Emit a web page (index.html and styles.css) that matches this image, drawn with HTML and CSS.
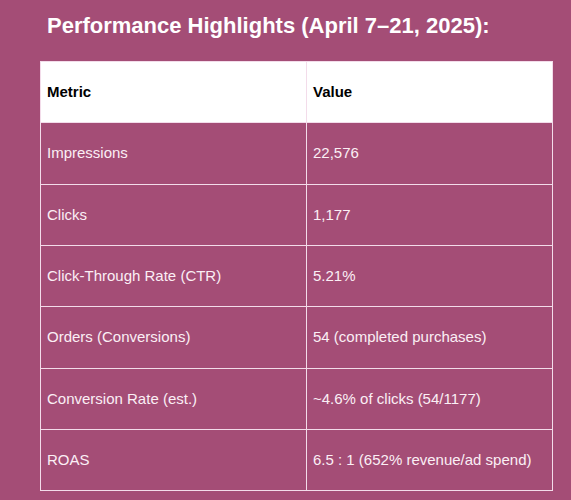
FILE: index.html
```html
<!DOCTYPE html>
<html lang="en">
<head>
    <meta charset="UTF-8">
    <title>Performance Highlights</title>
    <link rel="stylesheet" href="styles.css">
</head>
<body>
    <div class="report">
        <h2>Performance Highlights (April 7–21, 2025):</h2>
        <table class="metrics">
            <thead>
                <tr><th>Metric</th><th>Value</th></tr>
            </thead>
            <tbody>
                <tr><td>Impressions</td><td>22,576</td></tr>
                <tr><td>Clicks</td><td>1,177</td></tr>
                <tr><td>Click-Through Rate (CTR)</td><td>5.21%</td></tr>
                <tr><td>Orders (Conversions)</td><td>54 (completed purchases)</td></tr>
                <tr><td>Conversion Rate (est.)</td><td>~4.6% of clicks (54/1177)</td></tr>
                <tr><td>ROAS</td><td>6.5 : 1 (652% revenue/ad spend)</td></tr>
            </tbody>
        </table>
    </div>
</body>
</html>
```

FILE: styles.css
```css
body {
    margin: 0;
    background-color: #a44d76;
    font-family: "Liberation Sans", Arial, sans-serif;
}
.report {
    padding: 13px 18px 0 40px;
}
h2 {
    margin: 0 0 23px 7px;
    font-size: 22px;
    line-height: 25px;
    color: #fff;
}
.metrics {
    width: 513px;
    border-collapse: collapse;
    font-size: 15px;
    line-height: 16.33px;
}
.metrics th,
.metrics td {
    border: 1px solid #f3dcea;
    padding: 22px 6px;
    text-align: left;
}
.metrics th {
    background: #fff;
    color: #000;
    font-weight: bold;
}
.metrics td {
    color: #fbeff5;
}
.metrics td:first-child,
.metrics th:first-child {
    width: 253px;
}
```
